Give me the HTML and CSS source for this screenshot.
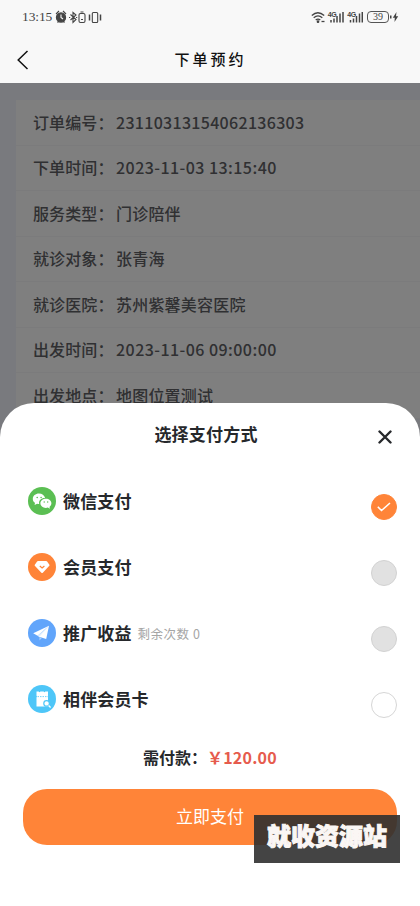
FILE: index.html
```html
<!DOCTYPE html>
<html lang="zh-CN">
<head>
<meta charset="utf-8">
<title>下单预约</title>
<link rel="stylesheet" href="styles.css">
</head>
<body>
<div class="app">
  <header class="top">
    <div class="status">
      <span class="time">13:15</span>
      <svg class="status-left" width="50" height="14" viewBox="0 0 50 14" fill="none" stroke="#444" stroke-width="1.1">
        <circle cx="6" cy="7.500" r="4.600" fill="#444"/><path d="M1 4l3-3M8 1l3 3M2.500 12.500L4 11M9.500 12.500L8 11"/><path d="M6 4.500v3l2 1.500" stroke="#f8f8f8"/>
        <path d="M15.500 4.500l5.500 5-3 3v-10l3 2.500-5.500 5M14 7.500h1.200M21 7.500h1.200"/>
        <rect x="24" y="3.500" width="6" height="9" rx="1.500"/><path d="M25.500 2h3M26 9.500h2"/>
        <path d="M34.500 4.500v6M45.500 4.500v6" stroke-width="1.500"/><rect x="37.300" y="2.500" width="5.400" height="10" rx="1"/>
      </svg>
      <div class="status-right">
        <svg width="52" height="14" viewBox="0 0 52 14" fill="none" stroke="#444" stroke-width="1.300">
          <path d="M.8 5.500q6-5.500 12.400 0M2.700 7.800q4.300-3.800 8.600 0M4.700 10q2.300-1.900 4.600 0"/>
          <circle cx="7" cy="11.700" r=".7" fill="#444"/><path d="M10.500 11.500h3"/>
          <path d="M20 12.500v-2.500M23 12.500v-4M26 12.500v-6.500M29 12.500v-9M32 12.500v-10.500M39.500 12.500v-2.500M42.500 12.500v-4M45.500 12.500v-6.500M48.500 12.500v-9M51.300 12.500v-10.500" stroke-width="1.500"/>
          <text class="net" x="16.800" y="6.500">4G</text><text class="net" x="36.300" y="6.500">4G</text>
        </svg>
        <span class="battery">39</span>
        <svg width="9" height="12" viewBox="0 0 9 12" fill="#444"><path d="M0 4.500h1.500v3H0zM6.500 1L2.800 6.700h2L4.500 11l3.700-5.700H6z"/></svg>
      </div>
    </div>
    <div class="nav">
      <svg class="back" width="12" height="20" viewBox="0 0 12 20" fill="none" stroke="#111" stroke-width="1.500"><path d="M10.500 1L1.200 10l9.300 9"/></svg>
      <h1>下单预约</h1>
    </div>
  </header>
  <main class="page">
    <dl class="order">
      <div class="row"><dt>订单编号：</dt><dd class="number">23110313154062136303</dd></div>
      <div class="row"><dt>下单时间：</dt><dd class="date">2023-11-03 13:15:40</dd></div>
      <div class="row"><dt>服务类型：</dt><dd>门诊陪伴</dd></div>
      <div class="row"><dt>就诊对象：</dt><dd>张青海</dd></div>
      <div class="row"><dt>就诊医院：</dt><dd>苏州紫馨美容医院</dd></div>
      <div class="row"><dt>出发时间：</dt><dd class="date">2023-11-06 09:00:00</dd></div>
      <div class="row"><dt>出发地点：</dt><dd>地图位置测试</dd></div>
    </dl>
    <div class="mask"></div>
  </main>
  <section class="sheet">
    <div class="sheet-head">
      <h2>选择支付方式</h2>
      <svg class="close" width="14" height="14" viewBox="0 0 14 14" fill="none" stroke="#26282b" stroke-width="2.400" stroke-linecap="round"><path d="M1.500 1.500l11 11M12.500 1.500l-11 11"/></svg>
    </div>
    <ul class="methods">
      <li>
        <svg class="icon" viewBox="0 0 28 28"><circle cx="14" cy="14" r="14" fill="#5bbf53"/><path d="M11 6.500C7.500 6.500 4.800 8.900 4.800 11.900c0 1.700.9 3 2.200 3.900L6.600 18l2.500-1.300c.6.200 1.300.2 2.100.2-.8-3.500 2.200-6 5.900-5.800C16.500 8.400 14 6.500 11 6.500z" fill="#fff"/><path d="M17.900 11.800c-3.100 0-5.500 2-5.500 4.500s2.400 4.600 5.500 4.600c.7 0 1.300-.1 1.900-.3l2.100 1.200-.4-1.900c1.200-.9 1.900-2.100 1.900-3.600 0-2.500-2.400-4.500-5.500-4.500z" fill="#fff"/><g fill="#5bbf53"><circle cx="9.200" cy="10.500" r=".8"/><circle cx="13.100" cy="10.500" r=".8"/><circle cx="16.200" cy="15" r=".7"/><circle cx="19.700" cy="15" r=".7"/></g></svg>
        <span class="name">微信支付</span>
        <span class="radio checked"><svg width="14" height="10" viewBox="0 0 14 10" fill="none" stroke="#fff" stroke-width="1.600"><path d="M.8 4.800L4.500 8.500 13 1"/></svg></span>
      </li>
      <li>
        <svg class="icon" viewBox="0 0 28 28"><circle cx="14" cy="14" r="14" fill="#ff8438"/><path d="M10 8h8.200q.5 0 .9.500l2.300 3.200q.4.500-.1 1l-6.500 7q-.7.700-1.400 0l-6.600-7q-.4-.5 0-1l2.300-3.200q.4-.5.900-.5z" fill="#fff"/><path d="M11.800 13l2.300 2 2.300-2" fill="none" stroke="#ff8438" stroke-width="1.200"/></svg>
        <span class="name">会员支付</span>
        <span class="radio disabled"></span>
      </li>
      <li>
        <svg class="icon" viewBox="0 0 28 28"><circle cx="14" cy="14" r="14" fill="#61a5fb"/><path d="M21 6.800L5.200 14.200l4.400 2.500zM21 6.800L10.200 17.500l8 2.400z" fill="#fff"/><path d="M21 6.800L9.600 16.700l2 .8z" fill="#e0efff"/><path d="M11.400 18l2.400.9-2.300 2.700z" fill="#a9d0ff"/></svg>
        <span class="name">推广收益</span><span class="note">剩余次数 0</span>
        <span class="radio disabled"></span>
      </li>
      <li>
        <svg class="icon" viewBox="0 0 28 28"><circle cx="14" cy="14" r="14" fill="#4ec6f8"/><path d="M8.500 6.500h2.200q.7 1.400 1.700 0h3.200q1 1.400 1.700 0h2.700v4.300q-1 .8 0 1.600v9.100h-11.500v-9.100q1-.8 0-1.600z" fill="#fff"/><path d="M9.500 11.600h9.500" stroke="#4ec6f8" stroke-width=".8" stroke-dasharray="1.500 1"/><circle cx="18.600" cy="18.400" r="2.800" fill="#fff" stroke="#4ec6f8" stroke-width="1.200"/><path d="M20.600 20.500l2 2" stroke="#fff" stroke-width="1.300"/></svg>
        <span class="name">相伴会员卡</span>
        <span class="radio"></span>
      </li>
    </ul>
    <p class="total">需付款：<span class="price">￥120.00</span></p>
    <button class="pay">立即支付</button>
  </section>
  <div class="stamp">就收资源站</div>
</div>
</body>
</html>
```
FILE: styles.css
```css
* { box-sizing: border-box; margin: 0; padding: 0; }
body { font-family: "Noto Sans CJK SC", sans-serif; color: #26282b; }
.app { position: relative; width: 420px; height: 906px; overflow: hidden; display: flex; flex-direction: column; }
.top { height: 83px; flex: none; background: #f8f8f8; }
.status { height: 34px; padding: 0 21px 0 22px; display: flex; align-items: center; color: #444; }
.time { width: 33px; font: 13.5px "Liberation Serif", serif; letter-spacing: -.1px; }
.status-left { display: block; }
.status-right { margin-left: auto; display: flex; align-items: center; gap: 4px; }
.net { font: bold 7px "Liberation Sans", sans-serif; fill: #444; stroke: none; letter-spacing: -.5px; }
.battery { width: 22px; height: 12px; border: 1px solid #555; border-radius: 4px; font: 10px/10px "Liberation Serif", serif; text-align: center; }
.battery + svg { margin-left: -3px; }
.nav { height: 49px; padding: 2px 18px 0 17px; display: flex; align-items: center; }
.nav h1 { flex: 1; font: 500 15px/24px "Noto Sans CJK SC", sans-serif; letter-spacing: 3px; text-align: center; color: #111; padding: 0 10px 2px 0; }
.page { position: relative; flex: 1; padding: 17px 0 0 16px; background: #f3f5fc; }
.mask { position: absolute; inset: 0; background: rgba(0, 0, 0, .5); }
.order { background: #fff; }
.row { height: 45.5px; padding: 0 0 1px 17px; display: flex; align-items: center; border-bottom: 1px solid #f6f6f8; font-size: 16px; line-height: 24px; color: #606165; }
.row dt { width: 83px; font-weight: 500; letter-spacing: .1px; white-space: nowrap; }
.row dd { font-weight: 500; letter-spacing: .2px; white-space: nowrap; }
.row dd.number { letter-spacing: .3px; }
.row dd.date { letter-spacing: .45px; }
.sheet { position: absolute; left: 0; right: 0; top: 403px; bottom: 0; background: #fff; border-radius: 34px 34px 0 0; padding: 0 23px; }
.sheet-head { height: 65px; display: grid; grid-template-columns: 1fr auto 1fr; }
.sheet-head h2 { grid-column: 2; font-size: 17px; line-height: 25px; font-weight: 700; padding: 18px 8px 0 0; letter-spacing: .2px; }
.close { justify-self: end; margin: 27px 5px 0 0; }
.methods { list-style: none; }
.methods li { height: 66px; padding-left: 5px; display: flex; align-items: center; }
.icon { width: 28px; height: 28px; margin-right: 7px; flex: none; }
.name { font-size: 17px; line-height: 25px; font-weight: 700; letter-spacing: .15px; margin-top: -2px; }
.note { font-size: 12.5px; color: #a5a5a5; margin: 0 0 0 6px; letter-spacing: .5px; }
.radio { width: 26px; height: 26px; margin: 12px 0 0 auto; border: 1px solid #d6d6d6; border-radius: 50%; display: flex; align-items: center; justify-content: center; }
.radio.disabled { background: #e1e1e1; border-color: #d2d2d2; }
.radio.checked { background: #ff8438; border-color: #ff8438; }
.total { height: 24px; margin-top: 13px; padding-left: 120px; display: flex; font-size: 16px; line-height: 24px; font-weight: 700; white-space: nowrap; }
.price { color: #e65b4d; letter-spacing: .2px; }
.pay { width: 374px; height: 56px; margin-top: 20px; display: block; border: 0; border-radius: 24px; background: #ff8438; color: #fff; font: 17px/25px "Noto Sans CJK SC", sans-serif; padding-bottom: 3px; }
.stamp { position: absolute; left: 254px; top: 815px; width: 146px; height: 48px; background: rgba(48, 48, 48, .9); color: #faf6f4; font-size: 24px; line-height: 40px; font-weight: 900; text-align: center; -webkit-text-stroke: 1px #faf6f4; }
```
